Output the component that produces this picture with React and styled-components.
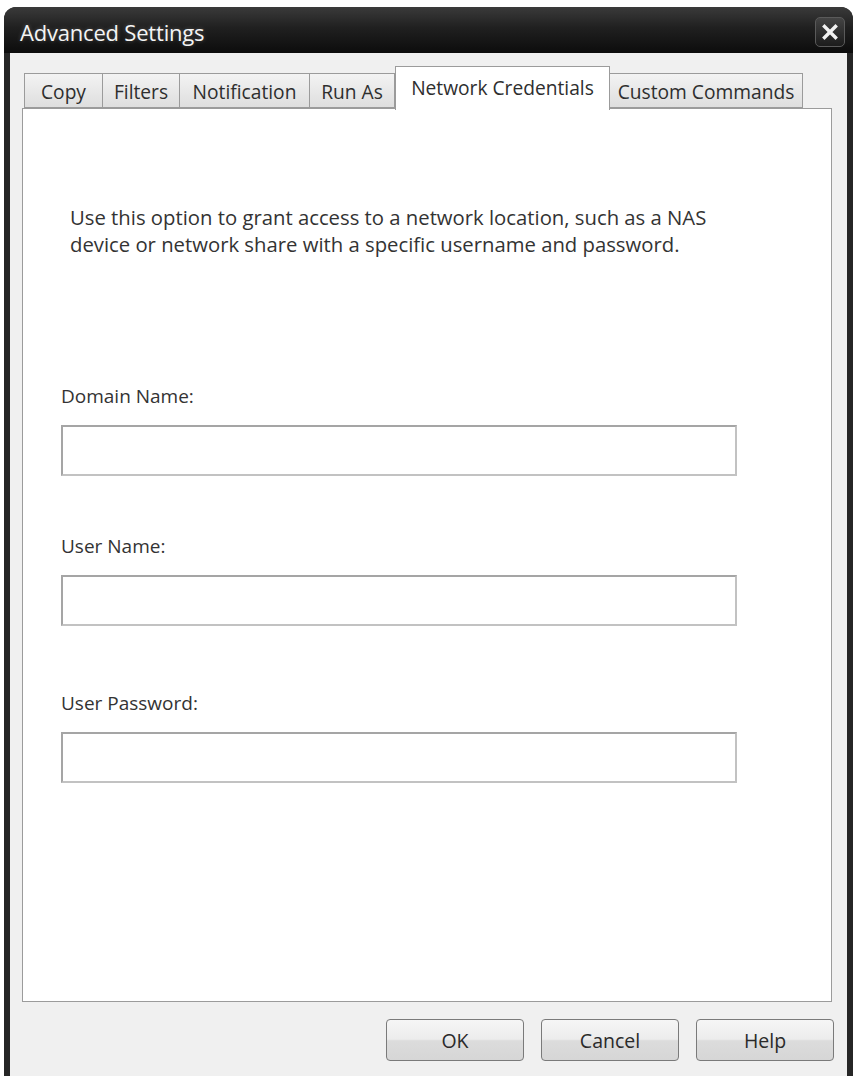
import React from "react";
import styled, { createGlobalStyle } from "styled-components";

const Global = createGlobalStyle`
  html, body { margin: 0; padding: 0; background: #ffffff; }
  body { font-family: "Open Sans", "Noto Sans", sans-serif; }
  #root { width: 853px; height: 1076px; overflow: hidden; }
`;

const Window = styled.div`
  margin: 7px 0 0 4px;
  width: 849px;
  height: 1069px;
  background: #262626;
  border-radius: 12px 12px 0 0;
  display: flex;
  flex-direction: column;
  box-sizing: border-box;
  padding: 0 6px;
`;

const TitleBar = styled.div`
  height: 46px;
  flex: none;
  display: flex;
  align-items: center;
  justify-content: space-between;
  background: linear-gradient(#3a3a3a 0%, #202020 45%, #0c0c0c 100%);
  margin: 0 -6px;
  padding: 3px 8px 0 16px;
  box-sizing: border-box;
  border-radius: 12px 12px 0 0;
`;

const Title = styled.span`
  color: #f4f4f4;
  font-size: 22px;
  letter-spacing: -0.2px;
  font-family: "Open Sans", sans-serif;
  text-shadow: 0 0 4px rgba(255,255,255,0.25);
`;

const CloseButton = styled.div`
  width: 30px;
  height: 30px;
  box-sizing: border-box;
  border: 1px solid #5a5a5a;
  border-radius: 5px;
  background: linear-gradient(#444, #1c1c1c);
  display: flex;
  align-items: center;
  justify-content: center;
`;

const Body = styled.div`
  flex: 1;
  background: #f0f0f0;
  display: flex;
  flex-direction: column;
  padding: 13px 15px 0 12px;
`;

const TabRow = styled.div`
  display: flex;
  align-items: flex-end;
  padding-left: 2px;
  height: 42px;
  position: relative;
  z-index: 1;
`;

const Tab = styled.div`
  box-sizing: border-box;
  width: ${p => p.$w}px;
  height: ${p => (p.$active ? "43.5px" : "35px")};
  display: flex;
  align-items: ${p => (p.$active ? "flex-start" : "center")};
  justify-content: center;
  padding-top: ${p => (p.$active ? "7px" : "2px")};
  font-size: 19.2px;
  color: #2e2e2e;
  border: 1.5px solid #9b9b9b;
  border-bottom: ${p => (p.$active ? "none" : "1.5px solid #9b9b9b")};
  border-left: ${p => (p.$first || p.$active ? "1.5px solid #9b9b9b" : "none")};
  margin-bottom: ${p => (p.$active ? "-1.5px" : "0")};
  background: ${p => (p.$active ? "#ffffff" : "linear-gradient(#f3f3f3, #dedede)")};
  white-space: nowrap;
`;

const Panel = styled.div`
  height: 894px;
  box-sizing: border-box;
  background: #ffffff;
  border: 1.5px solid #9b9b9b;
  display: flex;
  flex-direction: column;
  padding: 95px 0 0 38px;
`;

const Description = styled.p`
  margin: 0 0 125px 9px;
  font-size: 20.3px;
  line-height: 27px;
  color: #333;
`;

const Field = styled.div`
  display: flex;
  flex-direction: column;
  margin-bottom: ${p => p.$mb}px;
`;

const Label = styled.label`
  font-size: 19px;
  color: #333;
  line-height: 26px;
  margin-bottom: 16px;
`;

const Input = styled.div`
  width: 676px;
  height: 51px;
  box-sizing: border-box;
  border: 2px solid #a5a5a5;
  border-right-color: #c2c2c2;
  border-bottom-color: #c2c2c2;
  background: #fff;
`;

const ButtonRow = styled.div`
  display: flex;
  justify-content: flex-end;
  gap: 17px;
  padding-top: 17px;
  margin-right: -2px;
`;

const Button = styled.div`
  width: 138px;
  height: 42px;
  box-sizing: border-box;
  border: 1.5px solid #7a7a7a;
  border-radius: 4px;
  background: linear-gradient(#f6f6f6 0%, #ececec 48%, #dcdcdc 52%, #d6d6d6 100%);
  display: flex;
  align-items: center;
  justify-content: center;
  font-size: 19.5px;
  color: #2a2a2a;
`;

const tabs = [
  { label: "Copy", w: 79, first: true },
  { label: "Filters", w: 77 },
  { label: "Notification", w: 130 },
  { label: "Run As", w: 85 },
  { label: "Network Credentials", w: 215, active: true },
  { label: "Custom Commands", w: 193 },
];

export default function App() {
  return (
    <>
      <Global />
      <Window>
        <TitleBar>
          <Title>Advanced Settings</Title>
          <CloseButton>
            <svg width="16" height="16" viewBox="0 0 16 16">
              <path d="M2.5 2.5 L13.5 13.5 M13.5 2.5 L2.5 13.5" stroke="#f2f2f2" strokeWidth="3.4" strokeLinecap="square" />
            </svg>
          </CloseButton>
        </TitleBar>
        <Body>
          <TabRow>
            {tabs.map(t => (
              <Tab key={t.label} $w={t.w} $active={t.active} $first={t.first}>
                {t.label}
              </Tab>
            ))}
          </TabRow>
          <Panel>
            <Description>
              Use this option to grant access to a network location, such as a NAS
              <br />
              device or network share with a specific username and password.
            </Description>
            <Field $mb={57}>
              <Label>Domain Name:</Label>
              <Input />
            </Field>
            <Field $mb={64}>
              <Label>User Name:</Label>
              <Input />
            </Field>
            <Field $mb={0}>
              <Label>User Password:</Label>
              <Input />
            </Field>
          </Panel>
          <ButtonRow>
            <Button>OK</Button>
            <Button>Cancel</Button>
            <Button>Help</Button>
          </ButtonRow>
        </Body>
      </Window>
    </>
  );
}
